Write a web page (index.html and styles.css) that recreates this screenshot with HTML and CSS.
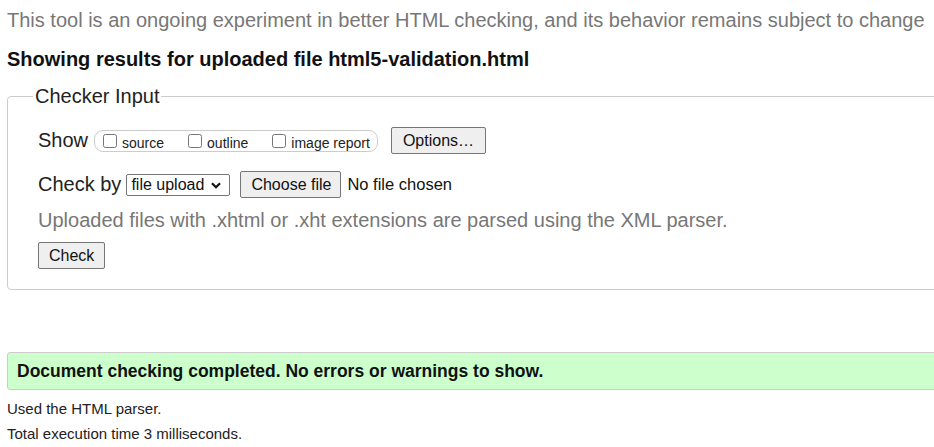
FILE: index.html
```html
<!DOCTYPE html>
<html lang="en">
<head>
<meta charset="utf-8">
<title>Nu Html Checker</title>
<link rel="stylesheet" href="styles.css">
</head>
<body>
<div class="page">
  <p class="note">This tool is an ongoing experiment in better HTML checking, and its behavior remains subject to change</p>
  <h2 class="title">Showing results for uploaded file html5-validation.html</h2>
  <fieldset class="checker">
    <legend class="legend">Checker Input</legend>
    <div class="row show-row">
      <span class="lbl">Show</span>
      <span class="opts">
        <label class="opt"><input type="checkbox" class="cb"><span>source</span></label>
        <label class="opt"><input type="checkbox" class="cb"><span>outline</span></label>
        <label class="opt"><input type="checkbox" class="cb"><span>image report</span></label>
      </span>
      <button type="button" class="btn btn-options">Options…</button>
    </div>
    <div class="row check-row">
      <span class="lbl">Check by</span>
      <span class="select-wrap">
        <select class="select"><option>file upload</option></select>
        <svg class="chev" width="10" height="7" viewBox="0 0 10 7"><path d="M1 1.2 L5 5.2 L9 1.2" fill="none" stroke="#111" stroke-width="2.2"/></svg>
      </span>
      <span class="file">
        <button type="button" class="btn btn-file">Choose file</button>
        <span class="nofile">No file chosen</span>
      </span>
    </div>
    <p class="hint">Uploaded files with .xhtml or .xht extensions are parsed using the XML parser.</p>
    <button type="button" class="btn btn-check">Check</button>
  </fieldset>
  <div class="success">Document checking completed. No errors or warnings to show.</div>
  <p class="meta">Used the HTML parser.</p>
  <p class="meta">Total execution time 3 milliseconds.</p>
</div>
</body>
</html>
```
FILE: styles.css
```css
html, body {
  margin: 0;
  padding: 0;
  overflow: hidden;
  background: #fff;
}
body {
  font-family: "Liberation Sans", Arial, sans-serif;
  color: #222;
}
.page {
  width: 1000px;
  padding: 0 7px;
}
.note {
  margin: 9px 0 0;
  font-size: 20px;
  line-height: 22px;
  color: #777;
  white-space: nowrap;
}
.title {
  margin: 17px 0 0;
  font-size: 20px;
  line-height: 22px;
  font-weight: bold;
  color: #111;
}
.checker {
  margin: 15px 0 0;
  padding: 19px 0 20px 30px;
  border: 1px solid #ccc;
  border-radius: 4px;
}
.legend {
  font-size: 20px;
  line-height: 23px;
  padding: 0 1px 0 2px;
  margin-left: -5px;
  color: #222;
}
.row {
  display: flex;
  align-items: center;
}
.lbl {
  font-size: 20px;
  color: #222;
}
.show-row .lbl {
  margin-right: 6px;
}
.opts {
  display: flex;
  align-items: center;
  height: 20px;
  padding: 0 7px 0 8px;
  border: 1px solid #ccc;
  border-radius: 9px;
  gap: 24px;
}
.opt {
  display: flex;
  align-items: center;
  font-size: 14px;
  color: #222;
}
.opt span {
  margin-top: 4px;
}
.cb {
  width: 14px;
  height: 14px;
  margin: 0 5px 0 0;
}
.btn {
  font-family: "Liberation Sans", Arial, sans-serif;
  font-size: 16px;
  line-height: 17px;
  color: #111;
  background: #efefef;
  border: 1px solid #767676;
  border-radius: 2px;
  padding: 4px 10px;
}
.btn-options {
  margin-left: 13px;
  padding: 4px 11px 4px 11px;
}
.check-row {
  margin-top: 17px;
}
.check-row .lbl {
  margin-right: 5px;
}
.select-wrap {
  position: relative;
  display: inline-flex;
}
.select {
  appearance: none;
  -webkit-appearance: none;
  font-family: "Liberation Sans", Arial, sans-serif;
  font-size: 16px;
  line-height: 18px;
  color: #111;
  background: #fff;
  border: 1px solid #767676;
  border-radius: 2px;
  padding: 1px 24px 1px 4px;
  width: 104px;
  height: 22px;
}
.chev {
  position: absolute;
  right: 9px;
  top: 8px;
  pointer-events: none;
}
.file {
  display: inline-flex;
  align-items: center;
  margin-left: 10px;
}
.btn-file {
  padding: 4px 9px 4px 10px;
}
.nofile {
  margin-left: 6px;
  font-size: 16.5px;
  color: #111;
}
.hint {
  margin: 11px 0 0;
  font-size: 20px;
  line-height: 22px;
  color: #777;
}
.btn-check {
  margin-top: 11px;
}
.success {
  margin-top: 62px;
  background: #ccffcc;
  border: 1px solid #ccc;
  border-radius: 3px;
  padding: 8px 9px;
  font-size: 17.5px;
  line-height: 20px;
  font-weight: bold;
  color: #111;
}
.meta {
  margin: 10px 0 0;
  font-size: 15px;
  line-height: 17px;
  color: #222;
}
.meta + .meta {
  margin-top: 8px;
}
```
